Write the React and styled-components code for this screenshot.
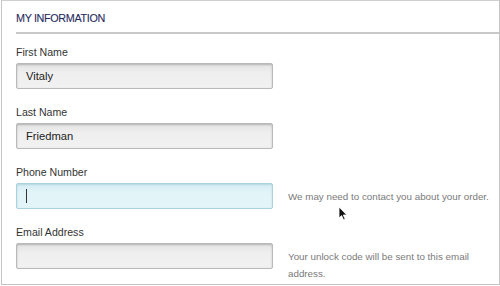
import styled, { createGlobalStyle } from "styled-components";

const Global = createGlobalStyle`
  html, body {
    margin: 0;
    padding: 0;
    background: #fff;
  }
  body {
    font-family: "Liberation Sans", Arial, sans-serif;
  }
`;

const Panel = styled.div`
  position: relative;
  box-sizing: border-box;
  width: 499px;
  height: 285px;
  margin-left: 1px;
  border: 1px solid #c4c4c4;
  border-top-color: #cfcfcf;
  background: #fff;
  overflow: hidden;
`;

const Header = styled.div`
  margin-left: 14px;
  height: 33px;
  border-bottom: 2px solid #c8c8c8;
  display: flex;
  align-items: center;
  padding-top: 3px;
  box-sizing: border-box;
  h2 {
    margin: 0;
    font-size: 10.8px;
    font-weight: normal;
    color: #262b5c;
    letter-spacing: -0.35px;
    -webkit-text-stroke: 0.1px #262b5c;
  }
`;

const Form = styled.div`
  padding: 12px 0 0 14px;
  display: flex;
  flex-direction: column;
  gap: 17px;
`;

const Field = styled.div`
  display: flex;
  flex-direction: column;
  gap: 4px;
`;

const Label = styled.label`
  font-size: 10.6px;
  line-height: 13px;
  color: #333;
`;

const Row = styled.div`
  display: flex;
  align-items: flex-start;
  gap: 15px;
`;

const Input = styled.div`
  box-sizing: border-box;
  width: 257px;
  height: 26px;
  border: 1px solid ${(p) => (p.$focus ? "#a9d2de" : "#b9b9b9")};
  border-radius: 2px;
  background: ${(p) =>
    p.$focus
      ? "linear-gradient(#d6eef5, #e2f4f8 40%, #e4f5f9)"
      : "linear-gradient(#e4e4e4, #efefef 40%, #f1f1f1)"};
  box-shadow: inset 0 1px 2px
    ${(p) => (p.$focus ? "rgba(80,140,160,0.25)" : "rgba(0,0,0,0.22)")};
  display: flex;
  align-items: center;
  padding-left: 9px;
  font-size: 11.2px;
  color: #222;
`;

const Caret = styled.span`
  display: inline-block;
  width: 1px;
  height: 14px;
  background: #333;
`;

const Help = styled.p`
  margin: 0;
  width: 198px;
  font-size: 9.8px;
  line-height: 16.5px;
  color: #7a7a7a;
  padding-top: 6px;
  white-space: ${(p) => (p.$nowrap ? "nowrap" : "normal")};
`;

const Pointer = styled.svg`
  position: absolute;
  left: 336px;
  top: 205px;
`;

const fields = [
  { label: "First Name", value: "Vitaly" },
  { label: "Last Name", value: "Friedman" },
  {
    label: "Phone Number",
    focus: true,
    help: "We may need to contact you about your order.",
    nowrap: true,
  },
  {
    label: "Email Address",
    help: "Your unlock code will be sent to this email address.",
  },
];

export default function App() {
  return (
    <>
      <Global />
      <Panel>
        <Header>
          <h2>MY INFORMATION</h2>
        </Header>
        <Form>
          {fields.map((f) => (
            <Field key={f.label}>
              <Label>{f.label}</Label>
              <Row>
                <Input $focus={f.focus}>
                  {f.value}
                  {f.focus && <Caret />}
                </Input>
                {f.help && <Help $nowrap={f.nowrap}>{f.help}</Help>}
              </Row>
            </Field>
          ))}
        </Form>
        <Pointer width="10" height="15" viewBox="0 0 10 15">
          <path
            d="M1 1 L1 12 L3.6 9.6 L5.6 14 L7.2 13.3 L5.3 9 L8.8 9 Z"
            fill="#111"
            stroke="#fff"
            strokeWidth="0.8"
          />
        </Pointer>
      </Panel>
    </>
  );
}
